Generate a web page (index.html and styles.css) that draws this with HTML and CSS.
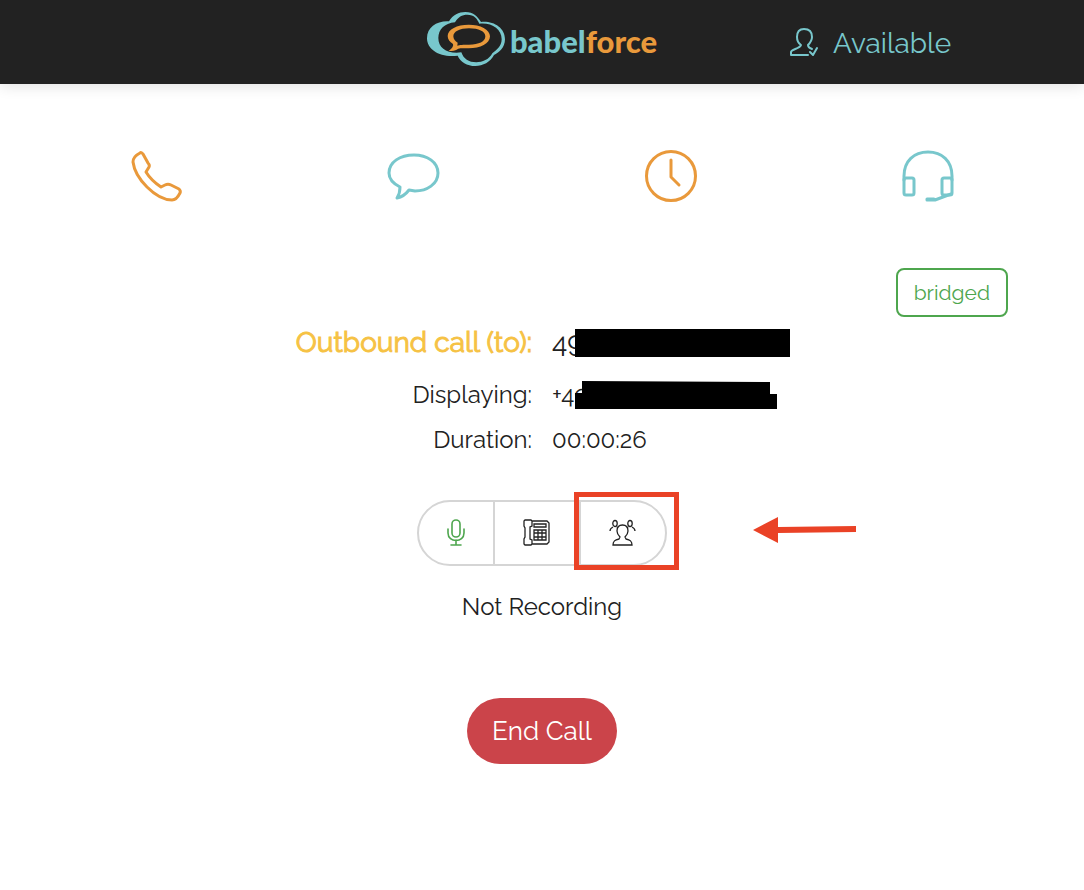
FILE: index.html
```
<!DOCTYPE html>
<html lang="en">
<head>
<meta charset="utf-8">
<meta name="viewport" content="width=device-width, initial-scale=1">
<title>babelforce</title>
<link rel="stylesheet" href="styles.css">
</head>
<body>
<header class="topbar">
	<a class="logo" href="#">
		<svg width="78" height="54" viewBox="0 0 234 162">
			<path fill="#78c7cc" fill-rule="evenodd" d="M66 28C78 8 95 0 115 0C140 0 152 14 162 30C198 26 234 46 234 82C234 108 215 122 201 129C190 150 168 162 145 162C120 162 100 150 92 131C42 138 0 115 0 79C0 45 30 26 66 28ZM84 31C93 15 105 8 121 8C142 8 151 21 157 35C193 31 224 50 224 82C224 104 208 114 196 124C186 143 166 151 148 151C125 151 110 141 103 121C62 126 34 110 34 78C34 53 52 34 84 31Z"/>
			<path fill="#e9993b" fill-rule="evenodd" d="M125 38C160 38 189 52 189 73C189 95 160 109 125 109C112 109 102 108 94 110C85 116 76 117 65 117C76 109 80 102 78 96C68 90 62 82 62 72C62 52 90 38 125 38ZM126 49C99 49 79 58 79 73C79 82 85 88 92 92L91 101C98 98 108 98 126 98C156 98 175 89 175 73C175 58 155 49 126 49Z"/>
		</svg>
		<span class="logo-text">babel<b>force</b></span>
	</a>
	<a class="status" href="#">
		<svg width="28" height="28" viewBox="0 0 28 28" fill="none" stroke="#78c7cc" stroke-width="2" stroke-linejoin="round" stroke-linecap="round">
			<path d="M18 27H1V24C1 21 10 21 11 17C8 15 7 12 7 9C7 4 9 1 14 1S22 4 22 9C22 12 20 15 18 17C18 19 19 20 22 21"/>
			<path d="M20 24L23 27L27 20"/>
		</svg>
		<span>Available</span>
	</a>
</header>

<nav class="tabs">
	<a href="#" aria-label="Calls">
		<svg class="orange" viewBox="0 0 54 54"><path d="M10 4C6 6 3 9 3 13C4 21 9 30 17 38C25 46 34 51 42 51C46 51 48 48 50 44C51 42 50 41 49 40L41 36C39 35 37 35 35 36L31 38C25 34 19 28 16 23L19 18C20 16 19 15 18 14L13 5C12 4 11 3 10 4Z"/></svg>
	</a>
	<a href="#" aria-label="Messages">
		<svg class="teal" viewBox="0 0 54 54"><path d="M27 6C40 6 51 13 51 24C51 35 40 42 28 42L22 41C19 45 15 48 10 49C12 46 13 42 13 38C7 35 2 30 2 24C2 13 13 6 27 6Z"/></svg>
	</a>
	<a href="#" aria-label="History">
		<svg class="orange" viewBox="0 0 54 54"><circle cx="27" cy="27" r="24.500"/><path d="M27 11V28L35 36"/></svg>
	</a>
	<a href="#" aria-label="Support">
		<svg class="teal" viewBox="0 0 54 54"><path d="M3 31V27C3 12 13 3 27 3S51 12 51 27V31"/><rect x="3" y="29" width="10" height="17" rx="2"/><rect x="41" y="29" width="10" height="17" rx="2"/><path d="M50 45L34 51H26V50H33"/></svg>
	</a>
</nav>

<main class="call">
	<div class="badge-row"><span class="badge">bridged</span></div>

	<dl class="details">
		<dt class="main">Outbound call (to):</dt>
		<dd class="main">49<svg class="hidden-number" width="215" height="28"><path d="M0 0H215V28H0Z"/></svg></dd>
		<dt>Displaying:</dt>
		<dd>+49<svg class="hidden-caller" width="202" height="28"><path d="M7 0L195 1V13H202V28H0V12H7Z"/></svg></dd>
		<dt>Duration:</dt>
		<dd>00:00:26</dd>
	</dl>

	<div class="controls">
		<button type="button" class="mic" aria-label="Mute">
			<svg width="28" height="28" viewBox="0 0 28 28"><rect x="10" y="1" width="8" height="17" rx="4"/><path d="M6 10V14C6 24 22 24 22 14V10M14 21V26M9 26H19"/></svg>
		</button>
		<button type="button" aria-label="Keypad">
			<svg width="28" height="28" viewBox="0 0 28 28"><path d="M2 1H8L9 2V7L7 8V20L9 21V25L8 26H2L1 25V20L2 18V9L1 7V2ZM9 2H24L26 4V23L24 25H9M11 5H23V8H11ZM11 11H23V21H11ZM15 11V21M19 11V21M11 14H23M11 18H23"/></svg>
		</button>
		<button type="button" aria-label="Conference">
			<svg width="28" height="28" viewBox="0 0 28 28"><path d="M4 26C4 22 6 21 10 20L11 18C9 16 8 14 8 12C8 8 10 6 13.500 6S19 8 19 12C19 14 18 16 16 18L17 20C21 21 23 22 23 26Z"/><ellipse cx="6" cy="4.500" rx="2.200" ry="3"/><ellipse cx="21" cy="4.500" rx="2.200" ry="3"/><path d="M1 12C1 10 2 9 4 8M26 12C26 10 25 9 23 8M8 8L9 9M19 8L18 9"/></svg>
		</button>
		<span class="highlight"></span>
		<svg class="arrow" width="103" height="26" viewBox="0 0 103 26"><path d="M0 13L25 0V10L103 9V15L25 16V26Z"/></svg>
	</div>

	<p class="recording">Not Recording</p>
	<button type="button" class="end-call">End Call</button>
</main>
</body>
</html>
```
FILE: styles.css
```
*{box-sizing:border-box;}
body,p,dl,dt,dd{margin:0;padding:0;}
body{background:#fff;color:#212121;font-family:Raleway,Lato,sans-serif;font-size:24px;}
a{text-decoration:none;}
button{font-family:inherit;cursor:pointer;}
svg{display:block;flex:none;}

.topbar{display:grid;grid-template-columns:1fr auto 1fr;align-items:center;height:84px;background:#222;box-shadow:0 2px 14px rgba(0,0,0,.12);}
.logo{grid-column:2;display:flex;align-items:center;gap:5px;padding-bottom:6px;}
.logo-text{padding-top:4px;color:#78c7cc;font-family:Lato,sans-serif;font-size:31px;font-weight:900;line-height:36px;}
.logo-text b{color:#e9993b;font-weight:900;}
.status{display:flex;align-items:center;justify-content:center;gap:15px;color:#78c7cc;font-size:28px;line-height:36px;}
.status span{padding-top:4px;}

.tabs{display:grid;grid-template-columns:repeat(4,1fr);padding:65px 28px 0;}
.tabs a{display:flex;justify-content:center;}
.tabs svg{width:54px;height:54px;fill:none;stroke-width:3;stroke-linejoin:round;stroke-linecap:round;}
.orange{stroke:#e9993b;}
.teal{stroke:#78c7cc;}

.call{display:flex;flex-direction:column;align-items:center;padding-top:65px;}
.badge-row{align-self:stretch;display:flex;justify-content:flex-end;padding-right:76px;}
.badge{padding:8px 16px;border:2px solid #4ea64e;border-radius:8px;color:#4ea64e;font-size:21px;line-height:29px;}

.details{align-self:stretch;display:grid;grid-template-columns:1fr 1fr;column-gap:20px;line-height:45px;}
.details dt{text-align:right;}
.details dd{position:relative;}
.details .main{font-size:28px;margin:3px 0 7px;}
.details dt.main{color:#f6c244;-webkit-text-stroke:1px #f6c244;}
.hidden-number,.hidden-caller{position:absolute;top:9px;left:23px;}

.controls{position:relative;display:flex;width:250px;height:66px;margin-top:38px;border:2px solid #d5d5d5;border-radius:33px;}
.controls button{flex:1 1 86px;display:flex;align-items:center;justify-content:center;padding:0;border:0;background:none;}
.controls button + button{border-left:2px solid #d5d5d5;}
.controls .mic{flex-basis:74px;}
.controls svg{fill:none;stroke:#222;stroke-width:1.3;}
.controls .mic svg{stroke:#4ea64e;stroke-width:1.6;stroke-linecap:round;}
.highlight{position:absolute;top:-10px;right:-14px;width:105px;height:78px;border:5px solid #ea4226;}
.controls .arrow{position:absolute;top:15px;left:334px;fill:#ea4226;stroke:none;}

.recording{margin-top:26px;line-height:30px;}
.end-call{width:150px;height:66px;margin-top:76px;border:0;border-radius:33px;background:#cb444a;color:#fff;font-size:26px;}
```
